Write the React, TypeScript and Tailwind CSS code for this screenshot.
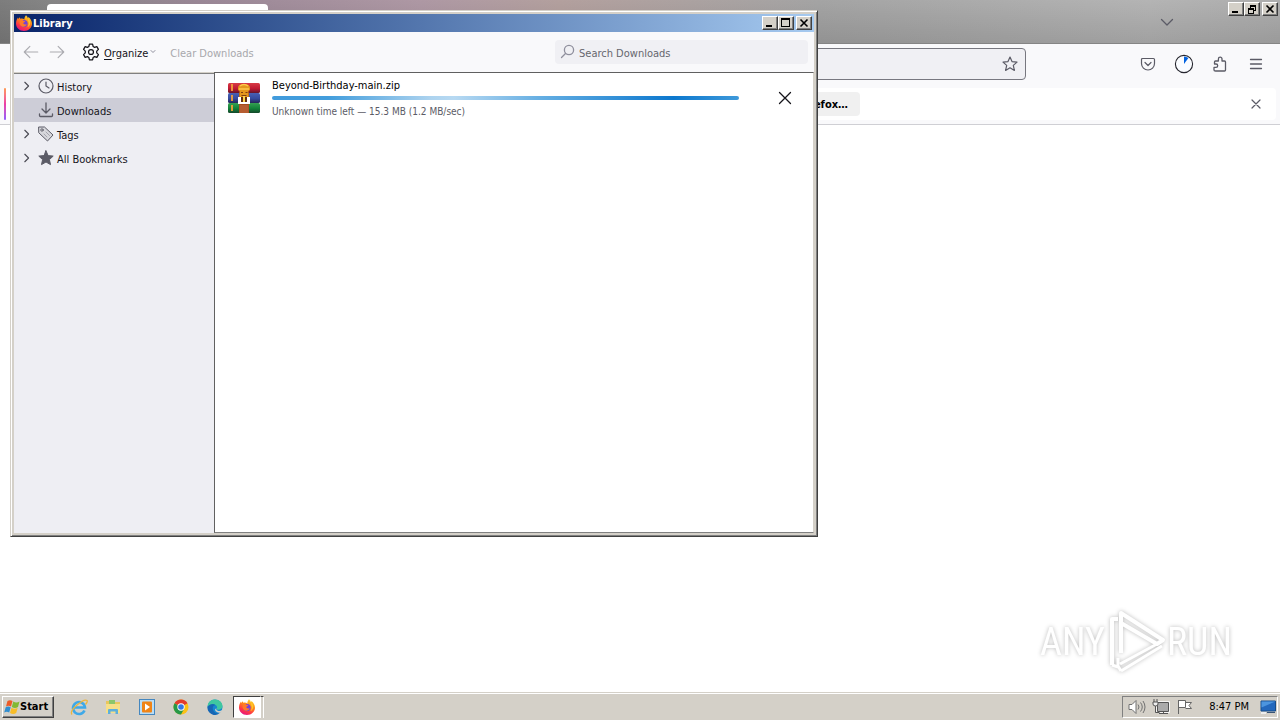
import type { ReactNode } from "react";

const uiFont = "font-['Tahoma','DejaVu_Sans_Condensed','Noto_Sans',sans-serif]";

function FirefoxLogo({ className }: { className: string }) {
  return (
    <svg viewBox="0 0 16 16" className={className} aria-hidden="true">
      <defs>
        <linearGradient id="fx-body" x1="0.8" y1="0" x2="0.3" y2="1">
          <stop offset="0" stopColor="#ffe32b" />
          <stop offset="0.4" stopColor="#ff8a16" />
          <stop offset="0.75" stopColor="#ff3647" />
          <stop offset="1" stopColor="#e31587" />
        </linearGradient>
      </defs>
      <path
        d="M10 .2c1 1 1.600 2 1.900 3 .4-.3.5-.7.5-1.100C14.500 3.700 16 6 16 8.700c0 4-3.500 7.200-8 7.200S0 12.700 0 8.400c0-2.400.9-4.500 2-5.900l.3 1.400c.5-.8 1-1.200 1.600-1.600l.2 1.500c1.500-.5 3.300-.2 4.300.6C8.300 2.900 8.900 1.300 10 .2z"
        fill="url(#fx-body)"
      />
      <circle cx="8" cy="8.600" r="3.600" fill="#7542d8" />
      <path d="M3.800 5.200c1.800-.8 3.200 0 3.800.8h1.600c-.3 1.100-1.600 1.300-1.800 2.100-.3 1.200 1.700 2 3.300.9-.5 2.600-3.200 3.400-5.200 2.200C3.700 10 3.100 7.500 3.800 5.200z" fill="#ff7a28" />
      <path d="M10 .2c2 2.200 2.300 4 2.100 5.500.9 1.600.8 4.600-.6 6.400 3.500-1.500 3.600-6.800.4-8.900C11.600 2 11 1 10 .2z" fill="#ffc52b" />
    </svg>
  );
}

function CaptionButton({ label, className = "", children }: { label: string; className?: string; children: ReactNode }) {
  return (
    <button
      type="button"
      aria-label={label}
      className={`flex h-[14px] w-4 items-center justify-center border border-t-white border-r-[#404040] border-b-[#404040] border-l-white bg-[#d4d0c8] shadow-[inset_-1px_-1px_0_#808080] ${className}`}
    >
      <svg viewBox="0 0 12 11" className="h-[11px] w-3 shrink-0" fill="none" stroke="#000" shapeRendering="crispEdges" aria-hidden="true">
        {children}
      </svg>
    </button>
  );
}

const closeGlyph = <path d="M2.500 1.500l7 7M9.500 1.500l-7 7" strokeWidth="1.600" shapeRendering="auto" />;
const minimizeGlyph = <path d="M2 8h6" strokeWidth="2" />;

function Line({ className, children }: { className: string; children: ReactNode }) {
  return (
    <svg viewBox="0 0 16 16" className={className} fill="none" stroke="currentColor" strokeLinecap="round" strokeLinejoin="round" aria-hidden="true">
      {children}
    </svg>
  );
}

function BrowserWindow() {
  return (
    <div className="flex grow flex-col bg-white">
      <header className="flex h-11 items-start border-b border-[#858585] bg-[linear-gradient(to_bottom,transparent,#0000001c),linear-gradient(to_right,#7d7d7d_0,#858585_48px,#9a8796_200px,#ae98a4_420px,#b3a09e_560px,#a4a4a4_820px,#b4b4b4_1150px,#adadad_100%)] pr-0.5">
        <div className="mt-1 ml-[47px] h-10 w-[221px] rounded-t bg-white" />
        <button type="button" aria-label="List all tabs" className="mt-3 mr-[53px] ml-auto text-[#5b5b66]">
          <Line className="h-5 w-4"><path d="M2.500 5.500L8 11l5.500-5.500" strokeWidth="1.300" /></Line>
        </button>
        <div className="mt-0.5 flex">
          <CaptionButton label="Minimize browser">{minimizeGlyph}</CaptionButton>
          <CaptionButton label="Restore browser">
            <path d="M4 1.500h6M4.500 1v3M9.500 1v6M8 6.500h2M2 5h6M2.500 5v5M7.500 5v5M2 9.500h6" />
            <path d="M4 2h6M2 5h6" strokeWidth="2" />
          </CaptionButton>
          <CaptionButton label="Close browser" className="ml-0.5">{closeGlyph}</CaptionButton>
        </div>
      </header>
      <div className="flex h-11 items-start bg-[#f9f9fb] pt-1 pr-4 text-[#5b5b66]">
        <div className="ml-[100px] flex h-8 w-[926px] items-center justify-end rounded border border-[#77777f] bg-[#f0f0f4] pr-[7px]">
          <button type="button" aria-label="Bookmark this page">
            <Line className="size-4"><path d="M8 1l2 4.600 5 .5-3.700 3.300 1.100 5L8 11.800l-4.400 2.600 1.100-5L1 6.100l5-.5z" strokeWidth="1.200" /></Line>
          </button>
        </div>
        <div className="ml-auto flex h-8 items-center gap-5">
          <button type="button" aria-label="Save to Pocket">
            <Line className="size-4"><path d="M2.500 2.500h11q1 0 1 1v4a6.500 6.500 0 0 1-13 0v-4q0-1 1-1zM5 6.500l3 3 3-3" strokeWidth="1.200" /></Line>
          </button>
          <button type="button" aria-label="Downloads progress">
            <svg viewBox="0 0 20 20" className="-mx-0.5 size-5" aria-hidden="true">
              <circle cx="10" cy="10" r="8.600" fill="#fafcff" stroke="#25252d" strokeWidth="1.100" />
              <path d="M10 10V2.600a7.400 7.400 0 0 1 4.400 1.500z" fill="#0061e0" />
            </svg>
          </button>
          <button type="button" aria-label="Extensions">
            <Line className="size-4"><path d="M3.500 15h9q1 0 1-1V6q0-1-1-1H10V3a1.800 1.800 0 0 0-3.600 0v2H3.500q-1 0-1 1V8H4a1.700 1.700 0 0 1 0 3.400H2V14q0 1 1.500 1z" strokeWidth="1.300" /></Line>
          </button>
          <button type="button" aria-label="Application menu">
            <Line className="size-4"><path d="M2.500 3.500h11M2.500 8h11M2.500 12.500h11" strokeWidth="1.300" /></Line>
          </button>
        </div>
      </div>
      <div className="border-b border-[#cfcfd4] bg-[#f9f9fb] px-1 pb-1">
        <div className="flex h-8 items-center rounded bg-white pr-3">
          <span className="h-8 w-0.5 rounded bg-gradient-to-b from-[#ff9a50] via-[#ed3ba5] to-[#9059ff]" />
          <div className="flex w-[854px] justify-end">
            <button type="button" className="h-6 rounded bg-[#f0f0f0] px-3 pt-0.5 text-[11px] font-bold text-black">Refresh Firefox…</button>
          </div>
          <button type="button" aria-label="Dismiss notification" className="ml-auto text-[#5b5b66]">
            <Line className="size-4"><path d="M4 4l8 8M12 4l-8 8" strokeWidth="1.200" /></Line>
          </button>
        </div>
      </div>
      <div className="mt-auto mr-12 mb-[17px] flex items-center justify-end font-['Liberation_Sans_Narrow','Roboto_Condensed',sans-serif] text-[38px] leading-none text-white drop-shadow-[0_0_2px_#bbb]">
        <span>ANY</span>
        <svg viewBox="0 0 62 66" className="h-[66px] w-[62px]" fill="none" stroke="#fff" strokeWidth="4" aria-hidden="true">
          <path d="M16 44V4l42 27-6 4L16 14M7 56V10h6" strokeLinejoin="round" />
          <path d="M13 49v9l-6-2M16 62l41-25M15 55l37-20M16 62l-3-5" strokeWidth="3" strokeLinejoin="round" />
        </svg>
        <span>RUN</span>
      </div>
    </div>
  );
}

const clockIcon = <><circle cx="8" cy="8" r="7" strokeWidth="1.200" /><path d="M8 4v4l3 2" strokeWidth="1.200" /></>;
const downloadIcon = <path d="M8 1v9.500M4 7l4 4 4-4M1.500 12v1.500q0 1 1 1h11q1 0 1-1V12" strokeWidth="1.300" />;
const tagIcon = <><path d="M1 1h5.500l8.500 8-5.500 6L1 7z" fill="#d7d7dc" /><circle cx="4" cy="4" r="1.200" fill="#fff" /><path d="M6 8l3 3M8 6l3.500 3.500" stroke="#a5a5ad" /></>;
const starIcon = <path d="M8 .8l2.100 4.800 5.100.5-3.800 3.500 1.100 5L8 12l-4.500 2.600 1.100-5L.8 6.100l5.100-.5z" fill="currentColor" />;

const places = [
  { name: "History", icon: clockIcon, expandable: true, selected: false },
  { name: "Downloads", icon: downloadIcon, expandable: false, selected: true },
  { name: "Tags", icon: tagIcon, expandable: true, selected: false },
  { name: "All Bookmarks", icon: starIcon, expandable: true, selected: false },
];

function ArchiveIcon() {
  return (
    <svg viewBox="0 0 32 32" className="size-8 shrink-0" aria-hidden="true">
      <defs>
        <linearGradient id="book-red" x1="0" y1="0" x2="0" y2="1"><stop stopColor="#d83a45" /><stop offset=".55" stopColor="#c01a32" /><stop offset="1" stopColor="#65152a" /></linearGradient>
        <linearGradient id="book-blue" x1="0" y1="0" x2="0" y2="1"><stop stopColor="#4960b5" /><stop offset=".55" stopColor="#354b9e" /><stop offset="1" stopColor="#252657" /></linearGradient>
        <linearGradient id="book-green" x1="0" y1="0" x2="0" y2="1"><stop stopColor="#35a052" /><stop offset=".55" stopColor="#128139" /><stop offset="1" stopColor="#15472a" /></linearGradient>
      </defs>
      <rect y="1" width="32" height="10" rx="1.500" fill="url(#book-red)" />
      <rect y="11" width="32" height="10" rx="1.500" fill="url(#book-blue)" />
      <rect y="21" width="32" height="10" rx="1.500" fill="url(#book-green)" />
      <path d="M4 2v7M4 13v6M4 23v6" stroke="#f2a03b" strokeWidth="1.800" />
      <path d="M11 11h10v20H11z" fill="#a54b1d" />
      <path d="M10 6q0-4 6-4t6 4v2l-1.500 1v7h-9V9L10 8z" fill="#e4971d" />
      <path d="M12 4q4-3 8 0M11 7h10" stroke="#ffc84c" strokeWidth="1.500" fill="none" />
      <path d="M13 10.500h2M17.500 10.500h2M13.500 13.500h5" stroke="#7c3b13" strokeWidth="1.200" />
      <path d="M10 15h3v5h6v-5h3v7H10z" fill="#fff" />
      <path d="M13 15h2v5h-2zM17 15h2v5h-2z" fill="#623013" />
      <path d="M15 14h2v6h-2z" fill="#ffd34c" />
      <path d="M11.500 23h9v8h-9z" fill="#b65d31" />
    </svg>
  );
}

function LibraryWindow() {
  return (
    <section
      aria-label="Library"
      className="absolute top-[10px] left-[10px] flex h-[527px] w-[808px] flex-col border border-t-[#d4d0c8] border-r-[#404040] border-b-[#404040] border-l-[#d4d0c8] bg-[#d4d0c8] p-[3px] shadow-[inset_1px_1px_0_#fff,inset_-1px_-1px_0_#808080]"
    >
      <div className="flex h-[18px] shrink-0 items-center bg-gradient-to-r from-[#0a246a] to-[#a6caf0] px-0.5 text-white">
        <FirefoxLogo className="size-4" />
        <h1 className="ml-px pt-0.5 text-[11px] font-bold">Library</h1>
        <div className="ml-auto flex">
          <CaptionButton label="Minimize">{minimizeGlyph}</CaptionButton>
          <CaptionButton label="Maximize">
            <path d="M1.500 1v8M9.500 1v8M1 8.500h9" /><path d="M1 1h9" strokeWidth="2" />
          </CaptionButton>
          <CaptionButton label="Close" className="ml-0.5">{closeGlyph}</CaptionButton>
        </div>
      </div>
      <div className="flex h-10 shrink-0 items-center bg-[#f9f9fb] pr-1.5 pl-2 text-[11px]">
        <button type="button" aria-label="Back" disabled className="text-[#ababb0]">
          <Line className="size-[18px]"><path d="M14 8H2M7 3L2 8l5 5" /></Line>
        </button>
        <button type="button" aria-label="Forward" disabled className="ml-2 text-[#ababb0]">
          <Line className="size-[18px]"><path d="M2 8h12M9 3l5 5-5 5" /></Line>
        </button>
        <button type="button" className="ml-4 flex items-center text-[#15141a]">
          <Line className="size-[18px]">
            <path d="M6.600 1h2.800l.5 2.100 1.300.8 2-.7 1.400 2.500-1.500 1.500v1.600l1.500 1.500-1.400 2.500-2-.7-1.300.8-.5 2.100H6.600l-.5-2.100-1.300-.8-2 .7-1.400-2.500 1.500-1.500V7.200L1.400 5.700l1.400-2.500 2 .7 1.300-.8z" strokeWidth="1.100" />
            <circle cx="8" cy="8" r="2.200" strokeWidth="1.100" />
          </Line>
          <span className="ml-1 pt-1"><span className="underline underline-offset-2">O</span>rganize</span>
          <Line className="ml-px size-2 text-[#8f8f9d]"><path d="M4 5l4 4 4-4" strokeWidth="2" /></Line>
        </button>
        <button type="button" disabled className="ml-[13px] pt-1 text-[#a8a8ac]">Clear Downloads</button>
        <label className="ml-auto flex h-6 w-[253px] items-center rounded-sm bg-[#f0f0f4] px-[5px] text-[#8f8f9d]">
          <Line className="size-4"><circle cx="9" cy="6" r="4.600" strokeWidth="1.300" /><path d="M5.500 9.500L1.500 13.500" strokeWidth="1.300" /></Line>
          <input aria-label="Search Downloads" placeholder="Search Downloads" className="ml-[3px] min-w-0 grow bg-transparent pt-1 text-[11px] outline-none placeholder:text-[#66666e]" />
        </label>
      </div>
      <div className="flex min-h-0 grow">
        <nav aria-label="Places" className="mt-px w-[200px] shrink-0 border-t border-[#808080] bg-[#eeeef3]">
          <ul>
            {places.map((place) => (
              <li key={place.name}>
                <button
                  type="button"
                  className={`flex h-6 w-full items-center pl-2 text-[11px] text-[#15141a] ${place.selected ? "bg-[#cdcdd7]" : ""}`}
                >
                  <span className="w-4 text-[#4a4a52]">
                    {place.expandable && <Line className="size-[10px]"><path d="M4.500 2l6 6-6 6" strokeWidth="1.800" /></Line>}
                  </span>
                  <Line className="size-4 text-[#5b5b66]">{place.icon}</Line>
                  <span className="ml-[3px] pt-1">{place.name}</span>
                </button>
              </li>
            ))}
          </ul>
        </nav>
        <main className="grow border border-t-[#606060] border-r-[#d4d0c8] border-b-[#808080] border-l-[#606060] bg-white">
          <article className="flex items-center pt-[3px] pr-5 pb-1 pl-[13px]">
            <ArchiveIcon />
            <div className="ml-3 flex w-[467px] flex-col">
              <h2 className="pt-0.5 text-[11px] leading-4 text-black">Beyond-Birthday-main.zip</h2>
              <div
                role="progressbar"
                aria-label="Download progress"
                className="mt-0.5 mb-[3px] h-1 rounded-full bg-[linear-gradient(to_right,#419bdc_0,#429ddc_12%,#add3ef_34%,#b7d9f2_39%,#63ade2_58%,#0c78ce_86%,#3e99da_100%)]"
              />
              <p className="pt-px text-[10px] leading-4 text-[#5b5b66]">Unknown time left — 15.3 MB (1.2 MB/sec)</p>
            </div>
            <button type="button" aria-label="Cancel download" className="ml-auto text-[#15141a]">
              <Line className="size-4"><path d="M2.500 2.500l11 11M13.500 2.500l-11 11" strokeWidth="1.300" /></Line>
            </button>
          </article>
        </main>
      </div>
    </section>
  );
}

function Taskbar() {
  return (
    <footer className="flex h-7 shrink-0 items-center border-t border-[#d4d0c8] bg-[#d4d0c8] px-0.5 text-[11px] text-black shadow-[inset_0_1px_0_#fff]">
      <button type="button" className="flex h-[22px] w-[52px] items-center border border-t-white border-r-[#404040] border-b-[#404040] border-l-white pl-px font-bold shadow-[inset_-1px_-1px_0_#808080]">
        <svg viewBox="0 0 16 16" className="size-4 shrink-0" aria-hidden="true">
          <path d="M3.500 2q2.500-1.500 5 0L7 7.500q-2.500-1.500-5 0z" fill="#ed5b27" />
          <path d="M9.300 2.500q3 2 6.200 0L14 8q-3 2-6.200 0z" fill="#82b932" />
          <path d="M1.700 8.300q2.500-1.500 5 0l-1.500 5.200q-2.500-1.500-5 0z" fill="#318ed0" />
          <path d="M7.500 8.800q3 2 6.200 0L12.200 14q-3 2-6.200 0z" fill="#f8bd28" />
        </svg>
        <span className="pt-0.5">Start</span>
      </button>
      <div className="ml-4 flex items-center gap-[18px]">
        <button type="button" aria-label="Internet Explorer">
          <svg viewBox="0 0 18 18" className="size-[18px]" fill="none" aria-hidden="true">
            <path d="M14.500 12.500A6 6 0 1 1 15 9.500H4" stroke="#3fa9e8" strokeWidth="2.600" />
            <path d="M2 16.500Q-.5 13.500 7 7t10-4.500q1 1-1.500 4" stroke="#edb63c" strokeWidth="1.300" />
          </svg>
        </button>
        <button type="button" aria-label="File Explorer" className="-ml-px">
          <svg viewBox="0 0 16 16" className="size-4" aria-hidden="true">
            <path d="M1 2h6l1 1h7v11H1z" fill="#e9c65d" />
            <path d="M4 1h6v4H4z" fill="#8bc66b" />
            <path d="M1 5h14v9H1z" fill="#f7df88" />
            <path d="M3 15v-4q0-1 1-1h8q1 0 1 1v4h-2.500v-2.500h-5V15z" fill="#5eafdb" />
          </svg>
        </button>
        <button type="button" aria-label="Media Player">
          <svg viewBox="0 0 16 16" className="size-4" aria-hidden="true">
            <rect x=".5" y=".5" width="15" height="15" fill="#b9ddf6" stroke="#4587bf" />
            <rect x="3" y="2.500" width="10" height="11" rx="1" fill="#f08416" />
            <path d="M6 4.500l5 3.500-5 3.500z" fill="#fff" />
          </svg>
        </button>
        <button type="button" aria-label="Chrome">
          <svg viewBox="0 0 16 16" className="size-4" aria-hidden="true">
            <circle cx="8" cy="8" r="7.500" fill="#fbc116" />
            <path d="M8 8L1.500 4.200A7.500 7.500 0 0 1 14.500 4.200z" fill="#e33b2e" />
            <path d="M8 8L1.500 4.200A7.500 7.500 0 0 0 8 15.500l3.200-5.700z" fill="#279847" />
            <circle cx="8" cy="8" r="3.700" fill="#fff" /><circle cx="8" cy="8" r="2.800" fill="#3478e5" />
          </svg>
        </button>
        <button type="button" aria-label="Edge">
          <svg viewBox="0 0 16 16" className="size-4" aria-hidden="true">
            <circle cx="8" cy="8" r="7.500" fill="#1687cf" />
            <path d="M.6 7.500C1 2 5 .5 8 .5c4.500 0 7.500 3.400 7.500 6.600 0 2.800-2.500 3.900-4.500 3.700-1.300-.2-1.600-.9-1-1.600C11 6 6 3.500.6 7.500z" fill="#3fc7a0" />
            <path d="M.6 7.500Q5 3.500 8.500 6C5 6.500 4.800 11 8 13.500c2 1.500 4 1 5.500 0A7.500 7.500 0 0 1 .6 7.500z" fill="#1766b4" />
            <path d="M9.500 9.500q-1 2 2 2.400 2 .2 4-.9-.5 1.500-2 2.500-3 .7-5-1.500-1.200-2 1-2.500z" fill="#d4d0c8" />
          </svg>
        </button>
      </div>
      <button type="button" aria-label="Firefox" className="ml-[10px] flex h-[22px] w-[28px] items-center justify-center border border-t-[#404040] border-r-white border-b-white border-l-[#404040] bg-white">
        <FirefoxLogo className="size-4" />
      </button>
      <span className="h-[22px] w-[3px] border-t border-r border-t-[#404040] border-r-white" />
      <div className="ml-auto flex h-[22px] items-center border border-t-[#808080] border-r-white border-b-white border-l-[#808080] pr-px pl-[5px]">
        <svg viewBox="0 0 18 16" className="h-4 w-[18px]" fill="none" stroke="#707070" aria-hidden="true">
          <path d="M1 5.500h3l4-4v13l-4-4H1z" fill="#fff" /><path d="M10 5.500q2 2.500 0 5M12.500 3.500q3.500 4.500 0 9M15 2q4 6 0 12" />
        </svg>
        <svg viewBox="0 0 18 16" className="ml-1.5 h-4 w-[18px]" fill="none" stroke="#555" aria-hidden="true">
          <path d="M5.500 3.500h11v9h-11z" fill="#bbb" stroke="#fff" strokeWidth="2.500" /><path d="M5.500 3.500h11v9h-11z" fill="#aaa" /><path d="M7 14.500h9M11.500 12.500v2M3.500 7v6.500h4M2 0v3M5 0v3" /><path d="M1 3h5v2q0 2-2.500 2T1 5z" fill="#eee" />
        </svg>
        <svg viewBox="0 0 18 16" className="ml-1.5 h-4 w-[18px]" fill="#fff" stroke="#666" aria-hidden="true">
          <path d="M2.500 1v14M2.500 1.500h7v7h-7M9.500 3.500h6l-2.500 3 2.500 3h-6" />
        </svg>
        <time className="ml-[15px] pt-0.5">8:47 PM</time>
        <svg viewBox="0 0 16 16" className="ml-[11px] size-4" aria-hidden="true">
          <path d="M1 2h14.500v10H1z" fill="#2368bd" stroke="#174c89" /><path d="M1.500 2.500h14l-14 6z" fill="#4c95df" /><path d="M1 13h5v2H1z" fill="#eee" /><path d="M7 13h8v1H7z" fill="#385475" />
        </svg>
      </div>
    </footer>
  );
}

export default function App() {
  return (
    <div className={`relative flex min-h-screen flex-col overflow-hidden bg-white ${uiFont}`}>
      <BrowserWindow />
      <LibraryWindow />
      <Taskbar />
    </div>
  );
}
